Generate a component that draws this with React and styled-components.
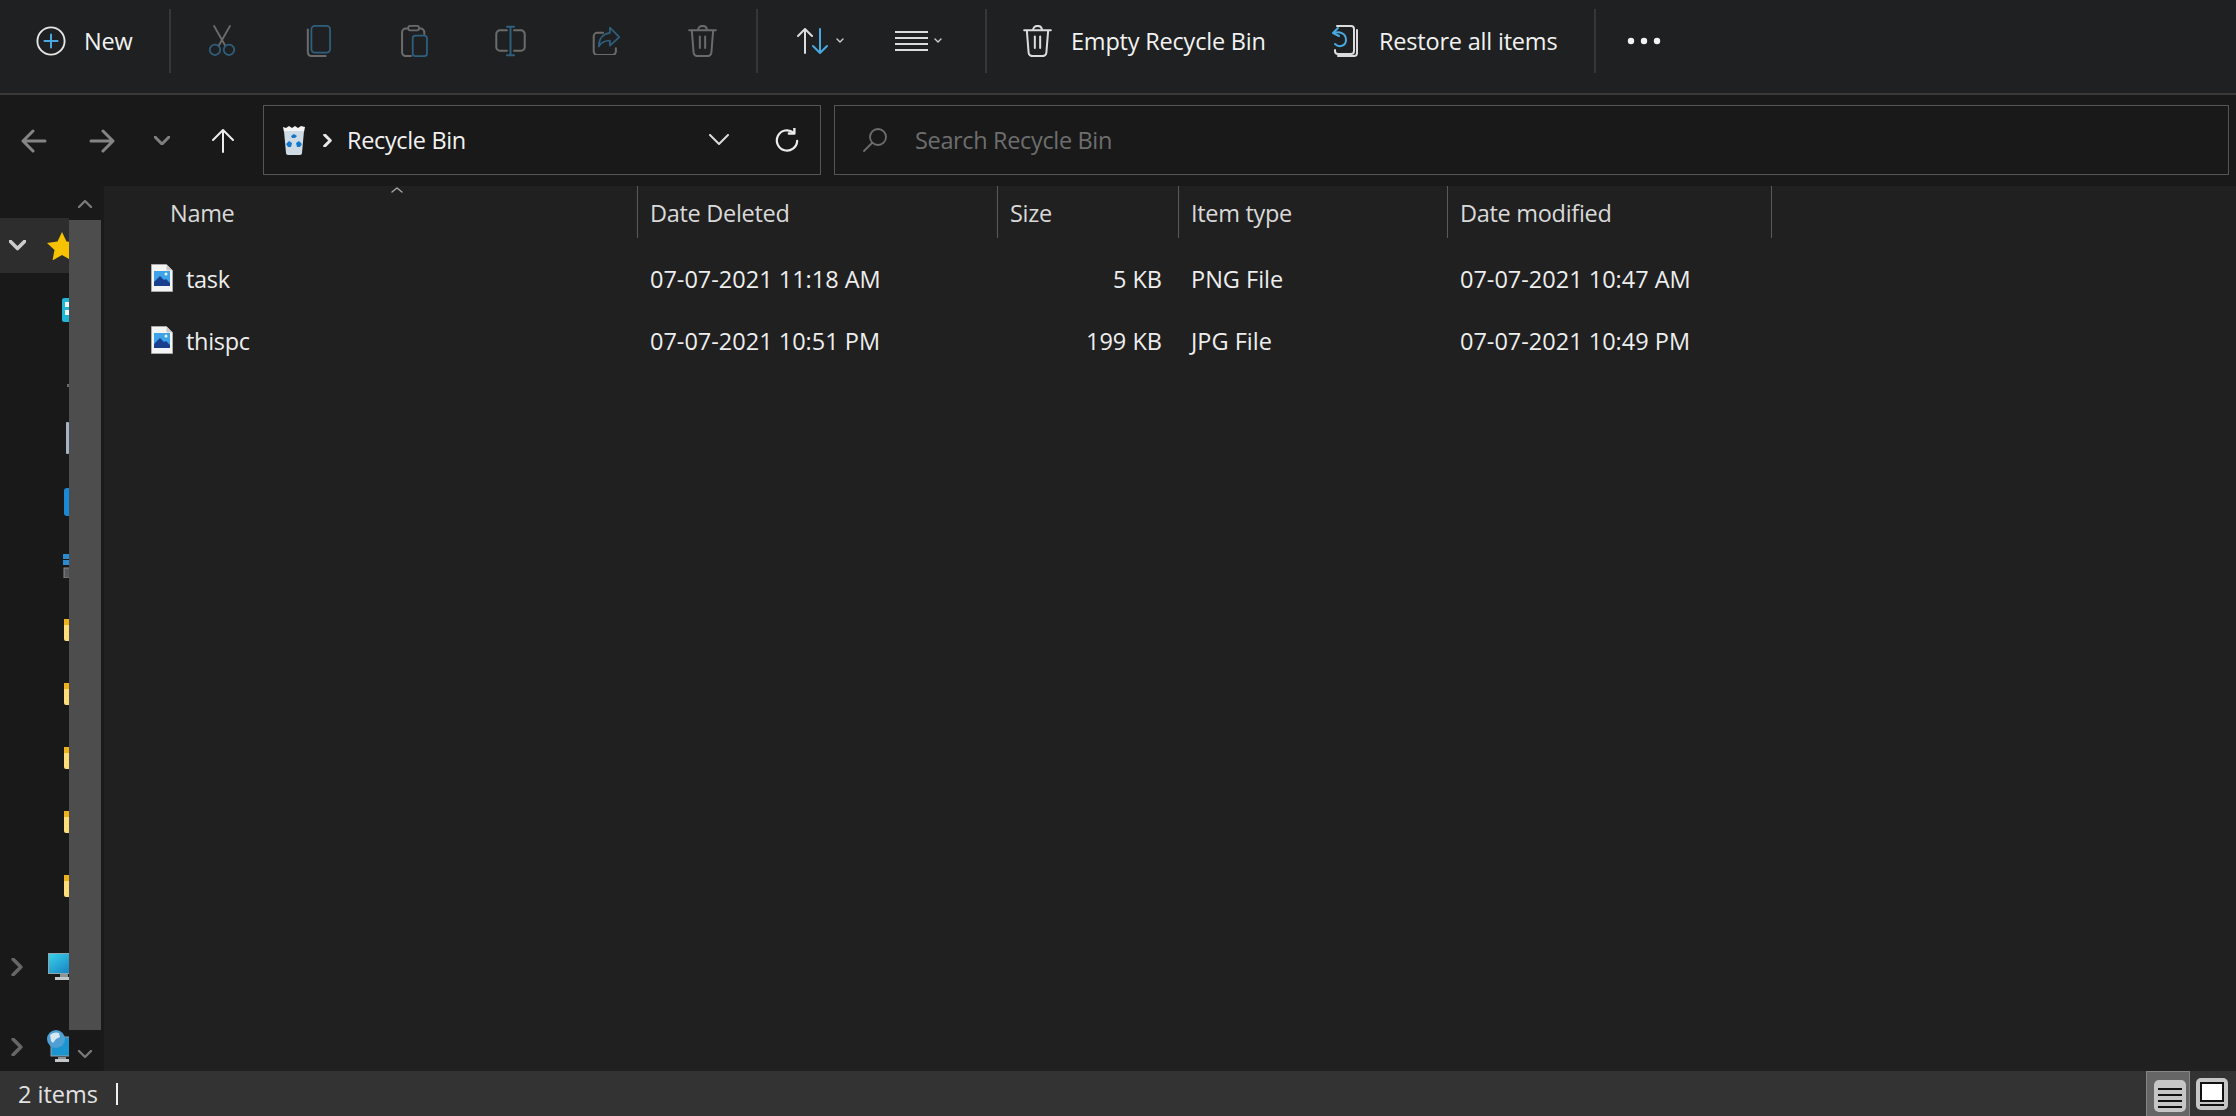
import React from "react";
import styled, { createGlobalStyle } from "styled-components";

const GlobalStyle = createGlobalStyle`
  html, body {
    margin: 0;
    padding: 0;
    background: #202020;
  }
  * {
    box-sizing: border-box;
  }
`;

const GRAY = "#6b6b6b";
const DIM_BLUE = "#2f5f7f";
const LIGHT = "#dcdcdc";
const BLUE = "#4aa8e0";

const Window = styled.div`
  width: 2236px;
  height: 1116px;
  display: flex;
  flex-direction: column;
  overflow: hidden;
  background: #202020;
  color: #f2f2f2;
  font-family: "Open Sans", "Liberation Sans", sans-serif;
  font-size: 23.5px;
`;

const Toolbar = styled.div`
  height: 95px;
  flex: none;
  display: flex;
  align-items: flex-start;
  background: #1f2021;
  border-bottom: 2px solid #3a3a3a;
`;

const ToolButton = styled.div`
  height: 81px;
  width: ${(p) => p.$w}px;
  margin-left: ${(p) => p.$ml || 0}px;
  padding-left: ${(p) => p.$pl || 0}px;
  flex: none;
  display: flex;
  align-items: center;
  justify-content: ${(p) => (p.$pl ? "flex-start" : "center")};
  gap: ${(p) => p.$gap || 0}px;
  letter-spacing: -0.2px;
`;

const ToolSep = styled.div`
  width: 2px;
  height: 64px;
  flex: none;
  margin-top: 9px;
  margin-left: ${(p) => p.$ml || 0}px;
  background: #363738;
`;

const AddressRow = styled.div`
  height: 91px;
  flex: none;
  display: flex;
  align-items: flex-start;
  background: #191919;
  padding-right: 7px;
`;

const NavButton = styled.div`
  width: ${(p) => p.$w}px;
  height: 91px;
  flex: none;
  display: flex;
  align-items: center;
  justify-content: center;
`;

const Field = styled.div`
  height: 70px;
  margin-top: 10px;
  margin-left: ${(p) => p.$ml}px;
  border: 1px solid #555;
  display: flex;
  align-items: center;
  letter-spacing: -0.35px;
`;

const AddressField = styled(Field)`
  width: 558px;
  flex: none;
  padding-left: 18px;
`;

const SearchField = styled(Field)`
  flex: 1;
  padding-left: 28px;
  color: #6e6e6e;
`;

const Crumb = styled.span`
  margin-left: ${(p) => p.$ml}px;
  display: flex;
`;

const FieldEnd = styled.div`
  margin-left: auto;
  display: flex;
  align-items: center;
  gap: 46px;
  padding-right: 21px;
`;

const SearchLabel = styled.span`
  margin-left: 28px;
`;

const Body = styled.div`
  flex: 1;
  display: flex;
  min-height: 0;
`;

const NavPane = styled.div`
  width: 104px;
  flex: none;
  display: flex;
  background: #191919;
  border-right: 3px solid #1a1a1a;
`;

const Tree = styled.div`
  width: 69px;
  flex: none;
  overflow: hidden;
  padding-top: 32px;
`;

const TreeRow = styled.div`
  height: ${(p) => p.$h || 64}px;
  width: 69px;
  margin-top: ${(p) => p.$mt || 0}px;
  display: flex;
  align-items: center;
  position: relative;
  overflow: hidden;
  background: ${(p) => (p.$active ? "#2d2d2d" : "transparent")};
  padding-left: ${(p) => p.$pl || 0}px;
  svg {
    flex: none;
  }
`;

const TreeChevron = styled.div`
  width: 34px;
  margin-right: ${(p) => p.$mr}px;
  flex: none;
  display: flex;
  justify-content: center;
`;

const Scrollbar = styled.div`
  width: 32px;
  flex: none;
  display: flex;
  flex-direction: column;
  align-items: center;
`;

const ScrollArrow = styled.div`
  height: ${(p) => p.$h}px;
  width: 100%;
  flex: none;
  display: flex;
  justify-content: center;
  align-items: center;
  padding-top: ${(p) => p.$pt}px;
`;

const ScrollThumb = styled.div`
  height: 810px;
  width: 100%;
  flex: none;
  background: #4d4d4d;
`;

const Content = styled.div`
  flex: 1;
  background: #202020;
`;

const grid = "534px 360px 181px 269px 324px";

const HeaderRow = styled.div`
  display: grid;
  grid-template-columns: ${grid};
  height: 52px;
  position: relative;
  color: #d9d9d9;
`;

const HeaderCell = styled.div`
  padding-left: ${(p) => p.$pl || 12}px;
  padding-top: 2px;
  border-right: 1px solid #5a5a5a;
  display: flex;
  align-items: center;
  letter-spacing: -0.3px;
`;

const SortCaret = styled.svg`
  position: absolute;
  left: 286px;
  top: 0;
`;

const FileList = styled.div`
  padding-top: 10px;
`;

const FileRow = styled.div`
  display: grid;
  grid-template-columns: ${grid};
  height: 62px;
  align-items: center;
  color: #eeeeee;
`;

const FileName = styled.div`
  display: flex;
  align-items: center;
  gap: 13px;
  padding-left: 47px;
  letter-spacing: -0.3px;
  svg {
    flex: none;
    margin-top: -3px;
  }
`;

const Cell = styled.div`
  padding-left: 12px;
  padding-right: 17px;
  text-align: ${(p) => (p.$right ? "right" : "left")};
`;

const StatusBar = styled.div`
  height: 45px;
  flex: none;
  display: flex;
  align-items: center;
  background: #333333;
  padding-left: 18px;
  color: #e2e2e2;
`;

const Cursor = styled.div`
  width: 2px;
  height: 22px;
  margin-left: 18px;
  background: #f0f0f0;
`;

const ViewButtons = styled.div`
  margin-left: auto;
  display: flex;
  height: 100%;
  align-items: stretch;
`;

const ViewButton = styled.div`
  width: ${(p) => p.$w}px;
  padding-left: ${(p) => p.$pl}px;
  padding-top: ${(p) => p.$pt}px;
  background: ${(p) => (p.$active ? "#666666" : "transparent")};
  border: ${(p) => (p.$active ? "1px solid #858585" : "none")};
  border-bottom: none;
  svg {
    display: block;
  }
`;

const Line = ({ d, c = GRAY, w = 2 }) => (
  <path d={d} fill="none" stroke={c} strokeWidth={w} strokeLinecap="round" strokeLinejoin="round" vectorEffect="non-scaling-stroke" />
);

const NewIcon = () => (
  <svg width="30" height="30" viewBox="0 0 32 32">
    <circle cx="16" cy="16" r="14.5" fill="none" stroke="#e6e6e6" strokeWidth="2" />
    <Line d="M16 9v14M9 16h14" c={BLUE} />
  </svg>
);

const CutIcon = () => (
  <svg width="28" height="32" viewBox="0 0 32 36">
    <Line d="M7 1l12.5 22M25 1L12.5 23" />
    <circle cx="8" cy="28" r="6" fill="none" stroke={DIM_BLUE} strokeWidth="2" />
    <circle cx="24" cy="28" r="6" fill="none" stroke={DIM_BLUE} strokeWidth="2" />
  </svg>
);

const CopyIcon = () => (
  <svg width="25" height="32" viewBox="0 0 28 36">
    <Line d="M2 5v25c0 3 2 5 5 5h15" />
    <rect x="6" y="1" width="21" height="30" rx="4" fill="none" stroke={DIM_BLUE} strokeWidth="2" />
  </svg>
);

const PasteIcon = () => (
  <svg width="27" height="32" viewBox="0 0 30 36">
    <Line d="M8 4H5C3 4 1 6 1 8v23c0 2 2 4 4 4h6M20 4h2c2 0 4 2 4 4v2" />
    <rect x="8" y="1" width="12" height="5" rx="2" fill="none" stroke={GRAY} strokeWidth="2" />
    <rect x="13" y="12" width="16" height="23" rx="3" fill="none" stroke={DIM_BLUE} strokeWidth="2" />
  </svg>
);

const RenameIcon = () => (
  <svg width="31" height="32" viewBox="0 0 34 36">
    <Line d="M13 6H5C3 6 1 8 1 10v15c0 2 2 4 4 4h8M21 6h8c2 0 4 2 4 4v15c0 2-2 4-4 4h-8" />
    <Line d="M17 2v32M13 2h8M13 34h8" c={DIM_BLUE} />
  </svg>
);

const ShareIcon = () => (
  <svg width="29" height="29" viewBox="0 0 32 34">
    <Line d="M12 8H5C3 8 1 10 1 12v18c0 2 2 4 4 4h18c2 0 4-2 4-4v-4" />
    <path d="M20 2l11 11-11 10v-6c-6 0-10 2-13 7 0-9 5-15 13-16z" fill="none" stroke={DIM_BLUE} strokeWidth="2" strokeLinejoin="round" />
  </svg>
);

const TrashIcon = ({ c = GRAY }) => (
  <svg width="29" height="32" viewBox="0 0 32 36">
    <Line d="M1 6h30M4 6l2 25c0 2 2 4 4 4h12c2 0 4-2 4-4l2-25M11 6c0-3 2-5 5-5s5 2 5 5M13 13v13M19 13v13" c={c} />
  </svg>
);

const SortIcon = () => (
  <svg width="32" height="26" viewBox="0 0 32 26">
    <Line d="M8 25V1M1 8l7-7 7 7" c="#dcdcdc" />
    <Line d="M23 1v24M16 18l7 7 7-7" c={BLUE} />
  </svg>
);

const ViewIcon = () => (
  <svg width="33" height="20" viewBox="0 0 33 20">
    <path d="M0 1h33M0 7h33M0 13h33M0 19h33" fill="none" stroke={LIGHT} strokeWidth="2" />
  </svg>
);

const MiniCaret = () => (
  <svg width="8" height="6" viewBox="0 0 8 6">
    <Line d="M1 1l3 3 3-3" c="#cfcfcf" w={1.4} />
  </svg>
);

const RestoreIcon = () => (
  <svg width="30" height="32" viewBox="0 0 30 32">
    <Line d="M8 1h14c2 0 3 1 3 3v22c0 2-1 3-3 3H9c-2 0-3-1-3-3v-1" c={LIGHT} />
    <Line d="M28 5v23c0 2-1 3-3 3H9" c={LIGHT} />
    <Line d="M9 3L4 8l6 3" c={BLUE} />
    <Line d="M5 8c5-2 12 0 12 7 0 6-7 8-11 4" c={BLUE} />
  </svg>
);

const DotsIcon = () => (
  <svg width="34" height="8" viewBox="0 0 34 8">
    <circle cx="4" cy="4" r="3.200" fill="#f2f2f2" />
    <circle cx="17" cy="4" r="3.200" fill="#f2f2f2" />
    <circle cx="30" cy="4" r="3.200" fill="#f2f2f2" />
  </svg>
);

const ArrowLeft = ({ flip, c }) => (
  <svg width="26" height="24" viewBox="0 0 26 24" style={flip ? { transform: "scaleX(-1)" } : undefined}>
    <Line d="M2 12h22M12 2L2 12l10 10" c={c} w={3} />
  </svg>
);

const ChevronDown = ({ w = 20, c = "#dcdcdc", sw = 2 }) => (
  <svg width={w} height={w * 0.6} viewBox="0 0 20 12">
    <Line d="M1 1l9 9 9-9" c={c} w={sw} />
  </svg>
);

const UpArrow = () => (
  <svg width="22" height="24" viewBox="0 0 22 24">
    <Line d="M11 23V1M1 11L11 1l10 10" c="#ececec" />
  </svg>
);

const BinIcon = () => (
  <svg width="24" height="30" viewBox="0 0 24 30">
    <path d="M1 2l3 1 3-2 3 2 3-2 3 2 3-2 4 1-1 5H2z" fill="#f4f4f4" />
    <path d="M2 6h20l-2 22c0 1-1 2-2 2H6c-1 0-2-1-2-2z" fill="#cfdbe4" />
    <path d="M9 11l3-2 3 2-2 2h-3zM7 16l3 2-1 4H6l-2-3zM17 16l3 3-2 3h-3l-1-4z" fill="#1577c9" />
  </svg>
);

const RefreshIcon = () => (
  <svg width="24" height="24" viewBox="0 0 26 26">
    <path d="M20 5a11 11 0 1 0 4 9" fill="none" stroke="#ececec" strokeWidth="2.400" strokeLinecap="round" />
    <Line d="M21 0v6h-6" c="#ececec" w={2.4} />
  </svg>
);

const SearchIcon = () => (
  <svg width="24" height="24" viewBox="0 0 24 24">
    <circle cx="15" cy="9" r="8" fill="none" stroke="#6e6e6e" strokeWidth="1.800" />
    <Line d="M9 15L1 23" c="#6e6e6e" w={1.8} />
  </svg>
);

const ChevronRight = ({ c = "#e8e8e8", size = 14, sw = 3 }) => (
  <svg width={size} height={size} viewBox="0 0 14 14">
    <Line d="M4 1l6 6-6 6" c={c} w={sw} />
  </svg>
);

const FileIcon = () => (
  <svg width="22" height="28" viewBox="0 0 22 28">
    <path d="M.5.500h15l6 6v21H.5z" fill="#f4f4f4" stroke="#a9a9a9" />
    <path d="M15.500.500v6h6z" fill="#c9c9c9" />
    <rect x="3" y="7" width="16" height="15" fill="#3ea2e8" />
    <path d="M3 22v-4l6-6 4 4 2-1 4 4v3z" fill="#1a3f8f" />
    <circle cx="15" cy="10" r="1.500" fill="#e8f4ff" />
  </svg>
);

const StarIcon = () => (
  <svg width="30" height="28" viewBox="0 0 30 28">
    <path d="M15 0l4.500 9.500 10.500 1.500-7.500 7 2 10.500L15 23l-9.500 5.500 2-10.500L0 11l10.500-1.500z" fill="#f7c200" />
  </svg>
);

const FolderSliver = () => (
  <svg width="26" height="22" viewBox="0 0 26 22">
    <rect width="26" height="22" rx="2" fill="#ffdc7a" />
    <rect width="26" height="6" fill="#efb21c" />
  </svg>
);

const QuickGlyph = () => (
  <svg width="26" height="24" viewBox="0 0 26 24">
    <rect width="26" height="24" rx="2" fill="#23b5d6" />
    <rect x="3" y="4" width="4" height="5" fill="#eaf7fb" />
    <rect x="3" y="12" width="4" height="5" fill="#eaf7fb" />
  </svg>
);

const SliverBar = () => (
  <svg width="26" height="32" viewBox="0 0 26 32">
    <rect width="3" height="32" rx="1" fill="#a4b4c4" />
  </svg>
);

const SliverBlue = () => (
  <svg width="26" height="28" viewBox="0 0 26 28">
    <rect width="26" height="28" rx="3" fill="#1b8ad6" />
  </svg>
);

const SliverDevice = () => (
  <svg width="26" height="24" viewBox="0 0 26 24">
    <rect width="26" height="5" fill="#2a8bd0" />
    <rect width="26" height="5" y="6" fill="#2a8bd0" />
    <rect x="1" y="14" width="25" height="10" fill="#55585c" stroke="#8a8a8a" />
  </svg>
);

const SliverDot = () => (
  <svg width="26" height="28" viewBox="0 0 26 28">
    <rect x="2" y="24" width="3" height="3" fill="#6a6a6a" />
  </svg>
);

const MonitorIcon = () => (
  <svg width="30" height="28" viewBox="0 0 30 28">
    <defs>
      <linearGradient id="screen" x1="0" y1="0" x2="1" y2="1">
        <stop offset="0" stopColor="#3bd3e8" />
        <stop offset="1" stopColor="#0f74bd" />
      </linearGradient>
    </defs>
    <rect x=".5" y=".5" width="29" height="20" fill="url(#screen)" stroke="#8fa4ad" />
    <rect x="12" y="21" width="8" height="3" fill="#8d9499" />
    <rect x="7" y="24" width="18" height="3" fill="#c2c7ca" />
  </svg>
);

const NetworkIcon = () => (
  <svg width="30" height="34" viewBox="0 0 30 34">
    <rect x="5" y="7" width="25" height="19" fill="#1b95cf" stroke="#8fa4ad" />
    <rect x="12" y="27" width="8" height="2" fill="#8d9499" />
    <rect x="9" y="29" width="16" height="3" fill="#c2c7ca" />
    <circle cx="10" cy="9" r="9" fill="#4f9fd4" />
    <path d="M4 5c3-3 7-3 9-2l1 4-4 2-3 4-2-2z" fill="#d5e8f4" />
  </svg>
);

const DetailsViewIcon = () => (
  <svg width="32" height="32" viewBox="0 0 32 32">
    <rect width="32" height="32" rx="5" fill="#c6c6c6" />
    <path d="M4 9h24M4 15h24M4 21h24M4 27h24" stroke="#111" strokeWidth="2" />
  </svg>
);

const TilesViewIcon = () => (
  <svg width="32" height="32" viewBox="0 0 32 32">
    <rect width="32" height="32" rx="5" fill="#c6c6c6" />
    <rect x="5" y="5" width="22" height="18" fill="#fff" stroke="#111" strokeWidth="2" />
    <path d="M4 27h24" stroke="#111" strokeWidth="2" />
  </svg>
);

const columns = ["Date Deleted", "Size", "Item type", "Date modified"];

const files = [
  { name: "task", deleted: "07-07-2021 11:18 AM", size: "5 KB", type: "PNG File", modified: "07-07-2021 10:47 AM" },
  { name: "thispc", deleted: "07-07-2021 10:51 PM", size: "199 KB", type: "JPG File", modified: "07-07-2021 10:49 PM" },
];

const disabledTools = [CutIcon, CopyIcon, PasteIcon, RenameIcon, ShareIcon, TrashIcon];

const treeSlivers = [
  { Icon: QuickGlyph, pl: 62 },
  { Icon: SliverDot, pl: 65 },
  { Icon: SliverBar, pl: 66 },
  { Icon: SliverBlue, pl: 64 },
  { Icon: SliverDevice, pl: 63 },
  { Icon: FolderSliver, pl: 64 },
  { Icon: FolderSliver, pl: 64 },
  { Icon: FolderSliver, pl: 64 },
  { Icon: FolderSliver, pl: 64 },
  { Icon: FolderSliver, pl: 64 },
];

export default function App() {
  return (
    <Window>
      <GlobalStyle />
      <Toolbar>
        <ToolButton $w={169} $pl={36} $gap={18}>
          <NewIcon />
          <span>New</span>
        </ToolButton>
        <ToolSep />
        {disabledTools.map((Icon, i) => (
          <ToolButton key={i} $w={96} $ml={i === 0 ? 3 : 0}>
            <Icon />
          </ToolButton>
        ))}
        <ToolSep $ml={6} />
        <ToolButton $w={98} $ml={13} $gap={7}>
          <SortIcon />
          <MiniCaret />
        </ToolButton>
        <ToolButton $w={98} $gap={6}>
          <ViewIcon />
          <MiniCaret />
        </ToolButton>
        <ToolSep $ml={18} />
        <ToolButton $w={340} $pl={36} $gap={19}>
          <TrashIcon c={LIGHT} />
          <span>Empty Recycle Bin</span>
        </ToolButton>
        <ToolButton $w={267} $pl={2} $gap={20}>
          <RestoreIcon />
          <span>Restore all items</span>
        </ToolButton>
        <ToolSep />
        <ToolButton $w={96}>
          <DotsIcon />
        </ToolButton>
      </Toolbar>

      <AddressRow>
        <NavButton $w={67}>
          <ArrowLeft c="#858585" />
        </NavButton>
        <NavButton $w={70}>
          <ArrowLeft flip c="#858585" />
        </NavButton>
        <NavButton $w={50}>
          <ChevronDown w={16} c="#7f7f7f" sw={3} />
        </NavButton>
        <NavButton $w={72}>
          <UpArrow />
        </NavButton>
        <AddressField $ml={4}>
          <BinIcon />
          <Crumb $ml={15}>
            <ChevronRight size={13} />
          </Crumb>
          <Crumb $ml={13}>Recycle Bin</Crumb>
          <FieldEnd>
            <ChevronDown />
            <RefreshIcon />
          </FieldEnd>
        </AddressField>
        <SearchField $ml={13}>
          <SearchIcon />
          <SearchLabel>Search Recycle Bin</SearchLabel>
        </SearchField>
      </AddressRow>

      <Body>
        <NavPane>
          <Tree>
            <TreeRow $h={55} $active>
              <TreeChevron $mr={13}>
                <ChevronDown w={17} c="#cccccc" sw={3.6} />
              </TreeChevron>
              <StarIcon />
            </TreeRow>
            <TreeRow $h={5} />
            {treeSlivers.map(({ Icon, pl }, i) => (
              <TreeRow key={i} $pl={pl}>
                <Icon />
              </TreeRow>
            ))}
            <TreeRow $mt={17}>
              <TreeChevron $mr={14}>
                <ChevronRight c="#666666" size={18} sw={3.6} />
              </TreeChevron>
              <MonitorIcon />
            </TreeRow>
            <TreeRow $mt={16}>
              <TreeChevron $mr={12}>
                <ChevronRight c="#666666" size={18} sw={3.6} />
              </TreeChevron>
              <NetworkIcon />
            </TreeRow>
          </Tree>
          <Scrollbar>
            <ScrollArrow $h={34} $pt={2}>
              <svg width="16" height="10" viewBox="0 0 16 10">
                <Line d="M2 8l6-6 6 6" c="#7a7a7a" w={2.4} />
              </svg>
            </ScrollArrow>
            <ScrollThumb />
            <ScrollArrow $h={41} $pt={6}>
              <svg width="16" height="10" viewBox="0 0 16 10">
                <Line d="M2 2l6 6 6-6" c="#7a7a7a" w={2.4} />
              </svg>
            </ScrollArrow>
          </Scrollbar>
        </NavPane>

        <Content>
          <HeaderRow>
            <HeaderCell $pl={66}>Name</HeaderCell>
            {columns.map((c) => (
              <HeaderCell key={c}>{c}</HeaderCell>
            ))}
            <SortCaret width="14" height="8" viewBox="0 0 14 8">
              <Line d="M2 6l5-4 5 4" c="#a8a8a8" w={1.4} />
            </SortCaret>
          </HeaderRow>
          <FileList>
            {files.map((f) => (
              <FileRow key={f.name}>
                <FileName>
                  <FileIcon />
                  <span>{f.name}</span>
                </FileName>
                <Cell>{f.deleted}</Cell>
                <Cell $right>{f.size}</Cell>
                <Cell>{f.type}</Cell>
                <Cell>{f.modified}</Cell>
              </FileRow>
            ))}
          </FileList>
        </Content>
      </Body>

      <StatusBar>
        <span>2 items</span>
        <Cursor />
        <ViewButtons>
          <ViewButton $active $w={44} $pl={7} $pt={8}>
            <DetailsViewIcon />
          </ViewButton>
          <ViewButton $w={46} $pl={6} $pt={7}>
            <TilesViewIcon />
          </ViewButton>
        </ViewButtons>
      </StatusBar>
    </Window>
  );
}
